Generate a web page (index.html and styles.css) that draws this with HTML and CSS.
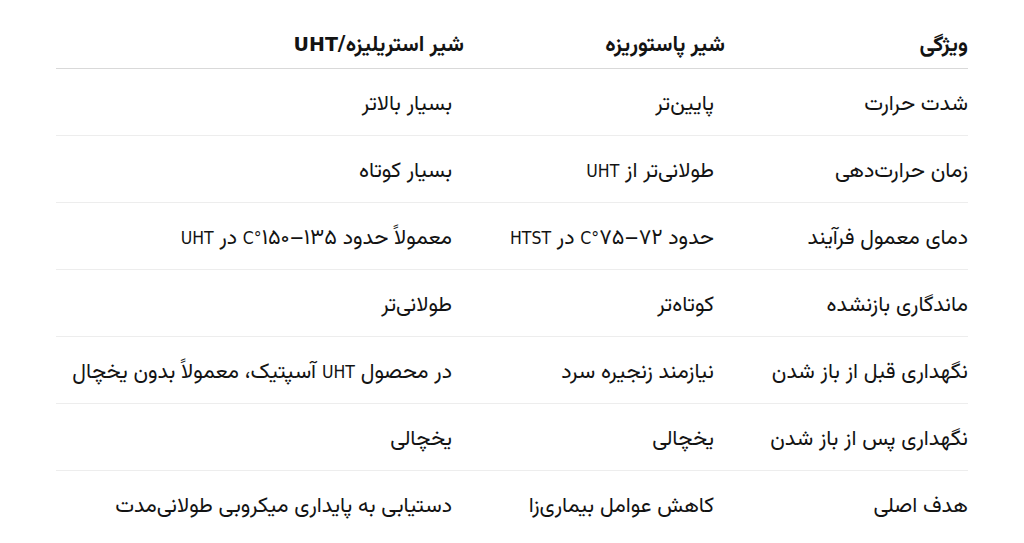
FILE: index.html
```html
<!DOCTYPE html>
<html lang="fa" dir="rtl">
<head>
<meta charset="utf-8">
<link rel="stylesheet" href="styles.css">
</head>
<body>
<div class="wrap">
<table class="cmp">
<colgroup><col class="c1"><col class="c2"><col class="c3"></colgroup>
<thead>
<tr><th>ویژگی</th><th>شیر پاستوریزه</th><th>شیر استریلیزه/<span class="lat">UHT</span></th></tr>
</thead>
<tbody>
<tr><td>شدت حرارت</td><td>پایین‌تر</td><td>بسیار بالاتر</td></tr>
<tr><td>زمان حرارت‌دهی</td><td>طولانی‌تر از <span class="lat">UHT</span></td><td>بسیار کوتاه</td></tr>
<tr><td>دمای معمول فرآیند</td><td>حدود ۷۲–۷۵<span class="lat">°C</span> در <span class="lat">HTST</span></td><td>معمولاً حدود ۱۳۵–۱۵۰<span class="lat">°C</span> در <span class="lat">UHT</span></td></tr>
<tr><td>ماندگاری بازنشده</td><td>کوتاه‌تر</td><td>طولانی‌تر</td></tr>
<tr><td>نگهداری قبل از باز شدن</td><td>نیازمند زنجیره سرد</td><td>در محصول <span class="lat">UHT</span> آسپتیک، معمولاً بدون یخچال</td></tr>
<tr><td>نگهداری پس از باز شدن</td><td>یخچالی</td><td>یخچالی</td></tr>
<tr><td>هدف اصلی</td><td>کاهش عوامل بیماری‌زا</td><td>دستیابی به پایداری میکروبی طولانی‌مدت</td></tr>
</tbody>
</table>
</div>
</body>
</html>
```
FILE: styles.css
```css
html, body { margin: 0; padding: 0; background: #fff; }
body { font-family: "Vazirmatn", "DejaVu Sans", sans-serif; color: #131313; }
.wrap { width: 912px; margin: 0 56px; padding-top: 26px; }
.cmp { width: 100%; border-collapse: collapse; table-layout: fixed; font-size: 21.5px; }
.c1 { width: 243px; }
.c2 { width: 261px; }
.c3 { width: 408px; }
.cmp th, .cmp td { text-align: right; padding: 0; vertical-align: middle; line-height: 1.2; white-space: nowrap; }
.cmp th { font-weight: bold; height: 41px; padding-bottom: 1px; border-bottom: 1px solid #d9d9d9; }
.cmp td { height: 59px; padding-top: 7px; border-bottom: 1px solid #ededed; }
.cmp td:nth-child(2) { padding-right: 11px; }
.cmp td:nth-child(3) { padding-right: 12px; }
.cmp tbody tr:last-child td { border-bottom: none; }
.lat { font-family: "DejaVu Sans Condensed", "DejaVu Sans", sans-serif; font-size: 17.5px; }
.cmp th .lat { font-family: "DejaVu Sans", sans-serif; font-size: 19px; }
```
